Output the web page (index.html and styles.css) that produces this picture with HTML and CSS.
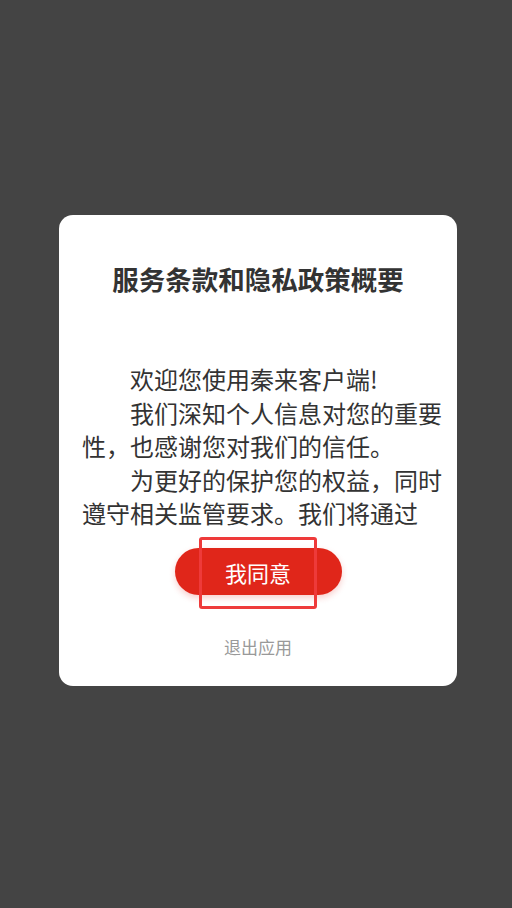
FILE: index.html
```html
<!DOCTYPE html>
<html lang="zh-CN">
<head>
<meta charset="utf-8">
<title>服务条款和隐私政策概要</title>
<link rel="stylesheet" href="styles.css">
</head>
<body>
<div class="screen">
  <div class="card">
    <h1 class="title">服务条款和隐私政策概要</h1>
    <div class="content">
      <p class="para">欢迎您使用秦来客户端!</p>
      <p class="para">我们深知个人信息对您的重要性，也感谢您对我们的信任。</p>
      <p class="para">为更好的保护您的权益，同时遵守相关监管要求。我们将通过《隐私政策》</p>
    </div>
    <div class="actions">
      <button class="agree">我同意</button>
      <span class="highlight"></span>
    </div>
    <div class="exit">退出应用</div>
  </div>
</div>
</body>
</html>
```
FILE: styles.css
```css
html, body {
  margin: 0;
  padding: 0;
  background: #444444;
}
.screen {
  width: 512px;
  height: 908px;
  background: #444444;
  padding-top: 215px;
  box-sizing: border-box;
  font-family: "Noto Sans CJK SC", "Noto Sans", sans-serif;
}
.card {
  margin-left: 59px;
  width: 398px;
  height: 471px;
  background: #ffffff;
  border-radius: 14px;
  box-sizing: border-box;
  padding-top: 46px;
  display: flex;
  flex-direction: column;
  align-items: stretch;
}
.title {
  margin: 0;
  font-size: 26.5px;
  line-height: 36px;
  font-weight: 700;
  color: #333333;
  text-align: center;
}
.content {
  margin-top: 65px;
  height: 168px;
  overflow: hidden;
  padding: 0 10px 0 23px;
}
.para {
  margin: 0;
  font-size: 24px;
  line-height: 33.6px;
  color: #333333;
  text-indent: 2em;
  line-break: strict;
}
.actions {
  position: relative;
  margin-top: 18px;
  display: flex;
  justify-content: center;
}
.agree {
  width: 167px;
  height: 47px;
  border: none;
  border-radius: 24px;
  background: #e0261a;
  color: #ffffff;
  font-family: "Noto Sans CJK SC", "Noto Sans", sans-serif;
  font-size: 22px;
  padding: 0;
  box-shadow: 0 3px 6px rgba(224, 38, 26, 0.22);
}
.highlight {
  position: absolute;
  left: 50%;
  top: -11px;
  width: 118px;
  height: 72px;
  margin-left: -59px;
  box-sizing: border-box;
  border: 3px solid #ee3a3a;
  border-radius: 3px;
}
.exit {
  margin-top: 40px;
  text-align: center;
  font-size: 17px;
  line-height: 24px;
  color: #999999;
}
```
